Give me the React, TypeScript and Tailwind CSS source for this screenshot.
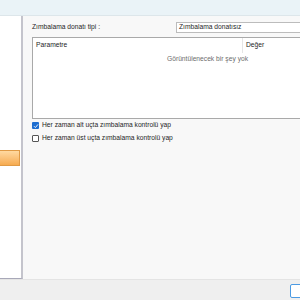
import React from "react";

export default function App() {
  const font = { fontFamily: '"Liberation Sans", Arial, sans-serif' };
  return (
    <div className="w-[300px] h-[300px] overflow-hidden flex flex-col bg-[#efefef] text-[6.7px] text-[#1e1e1e]" style={font}>
      <div className="h-[16px] shrink-0 bg-[#eaf3f7] border-b border-[#dde6ea]" />
      <div className="h-[263px] shrink-0 flex">
        <div className="w-[23px] shrink-0 bg-white border-r-2 border-[#c4c4cc] border-b border-b-[#a8a8b8] flex flex-col">
          <div className="h-[134px]" />
          <div className="h-[16px] w-[20px] bg-gradient-to-b from-[#ffd9a0] to-[#f6ab4f] border border-[#e09a45] border-l-0" />
        </div>
        <div className="flex-1 bg-[#f8f8f8] pl-[9px] pt-[6px] flex flex-col min-w-0">
          <div className="flex items-center h-[11px] -mr-[20px]">
            <div className="w-[144px] shrink-0">Zımbalama donatı tipi :</div>
            <div className="flex-1 h-[11px] bg-white border border-[#bcbcbc] flex items-center pl-[2px]">Zımbalama donatısız</div>
          </div>
          <div className="mt-[4px] h-[82px] bg-white border border-[#a9a9a9] -mr-[20px] relative">
            <div className="flex h-[15px] items-center">
              <div className="w-[209px] pl-[3px]">Parametre</div>
              <div className="w-px h-[15px] bg-[#e5e5e5]" />
              <div className="pl-[3px]">Değer</div>
            </div>
            <div className="pl-[134px] mt-[1px] text-[#6d6d6d]">Görüntülenecek bir şey yok</div>
          </div>
          <div className="mt-[3px] flex items-center h-[7px] gap-[3px]">
            <div className="w-[7px] h-[7px] bg-[#1f6fd1] rounded-[1px] flex items-center justify-center">
              <svg width="6" height="6" viewBox="0 0 6 6"><path d="M1 3.2 L2.4 4.6 L5 1.4" stroke="white" strokeWidth="0.9" fill="none" /></svg>
            </div>
            <span>Her zaman alt uçta zımbalama kontrolü yap</span>
          </div>
          <div className="mt-[6px] flex items-center h-[7px] gap-[3px]">
            <div className="w-[7px] h-[7px] bg-white border border-[#555] rounded-[1px]" />
            <span>Her zaman üst uçta zımbalama kontrolü yap</span>
          </div>
        </div>
      </div>
      <div className="flex-1 border-t border-[#e4e4e4] flex justify-end pt-[4px] overflow-hidden">
        <div className="w-[14px] h-[14px] -mr-[4px] bg-white border border-[#4c9be3] rounded-[2px]" />
      </div>
    </div>
  );
}
